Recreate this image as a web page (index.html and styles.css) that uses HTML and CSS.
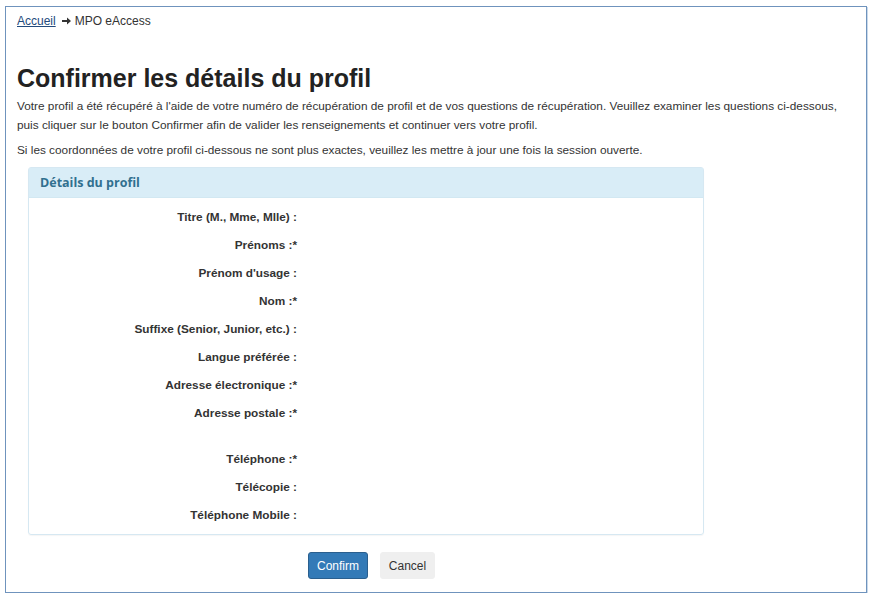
FILE: index.html
```html
<!DOCTYPE html>
<html lang="fr">
<head>
<meta charset="utf-8">
<title>Confirmer les détails du profil</title>
<link rel="stylesheet" href="styles.css">
</head>
<body>
<div class="frame">
  <nav class="crumbs"><a href="#" class="crumb-link">Accueil</a><svg class="crumb-arrow" width="9" height="8" viewBox="0 0 9 8" aria-hidden="true"><path d="M0 3h5V0.5L9 4 5 7.5V5H0z" fill="#333"/></svg><span>MPO eAccess</span></nav>
  <h1 class="title">Confirmer les détails du profil</h1>
  <p class="intro">Votre profil a été récupéré à l'aide de votre numéro de récupération de profil et de vos questions de récupération. Veuillez examiner les questions ci-dessous, puis cliquer sur le bouton Confirmer afin de valider les renseignements et continuer vers votre profil.</p>
  <p class="intro second">Si les coordonnées de votre profil ci-dessous ne sont plus exactes, veuillez les mettre à jour une fois la session ouverte.</p>
  <section class="panel">
    <div class="panel-heading">Détails du profil</div>
    <div class="panel-body">
      <div class="row"><span class="label">Titre (M., Mme, Mlle) :</span></div>
      <div class="row"><span class="label">Prénoms :*</span></div>
      <div class="row"><span class="label">Prénom d'usage :</span></div>
      <div class="row"><span class="label">Nom :*</span></div>
      <div class="row"><span class="label">Suffixe (Senior, Junior, etc.) :</span></div>
      <div class="row"><span class="label">Langue préférée :</span></div>
      <div class="row"><span class="label">Adresse électronique :*</span></div>
      <div class="row tall"><span class="label">Adresse postale :*</span></div>
      <div class="row"><span class="label">Téléphone :*</span></div>
      <div class="row"><span class="label">Télécopie :</span></div>
      <div class="row"><span class="label">Téléphone Mobile :</span></div>
    </div>
  </section>
  <div class="actions">
    <button class="btn btn-primary">Confirm</button>
    <button class="btn btn-default">Cancel</button>
  </div>
</div>
</body>
</html>
```
FILE: styles.css
```css
html, body {
  margin: 0;
  padding: 0;
  background: #ffffff;
}
body {
  font-family: "Liberation Sans", Arial, sans-serif;
  color: #333333;
  font-size: 12px;
}
.frame {
  margin: 6px 4px 0 5px;
  height: 587px;
  border: 1px solid #6f93bd;
  box-shadow: 1px 1px 0 #c9d9ea;
  padding: 0 11px;
  box-sizing: border-box;
}
.crumbs {
  padding-top: 7px;
  line-height: 15px;
  font-size: 12px;
  color: #333;
}
.crumb-link {
  color: #234a7c;
  text-decoration: underline;
}
.crumb-arrow {
  margin: 0 4px 0 6px;
  vertical-align: 0;
}
.title {
  margin: 34px 0 0 0;
  font-size: 25px;
  line-height: 30px;
  font-weight: bold;
  color: #222;
}
.intro {
  margin: 4px 0 0 0;
  line-height: 19px;
  font-size: 11.8px;
  color: #333;
}
.intro.second {
  margin-top: 6px;
}
.panel {
  margin: 7px 0 0 11px;
  width: 676px;
  border: 1px solid #d6e8f2;
  border-radius: 3px;
  box-sizing: border-box;
  box-shadow: 0 1px 1px rgba(0,0,0,0.04);
}
.panel-heading {
  background: #d9edf7;
  color: #31708f;
  height: 29px;
  line-height: 29px;
  padding-left: 11px;
  font-family: "Open Sans", "Noto Sans", sans-serif;
  font-weight: bold;
  font-size: 12.5px;
  border-bottom: 1px solid #d2e8f2;
}
.panel-body {
  padding: 5px 0 5px 0;
}
.row {
  height: 28px;
  display: flex;
  align-items: center;
}
.row.tall {
  height: 46px;
  align-items: flex-start;
  padding-top: 7px;
  box-sizing: border-box;
}
.label {
  width: 268px;
  text-align: right;
  font-weight: bold;
  color: #333;
  font-size: 11.8px;
}
.actions {
  display: flex;
  gap: 12px;
  margin-top: 17px;
  padding-left: 291px;
}
.btn {
  font-family: "Liberation Sans", Arial, sans-serif;
  font-size: 12px;
  height: 27px;
  border-radius: 3px;
  cursor: pointer;
}
.btn-primary {
  width: 60px;
  background: #337ab7;
  border: 1px solid #2a5f8e;
  color: #fff;
}
.btn-default {
  width: 55px;
  background: #efefef;
  border: 1px solid #efefef;
  color: #333;
}
```
